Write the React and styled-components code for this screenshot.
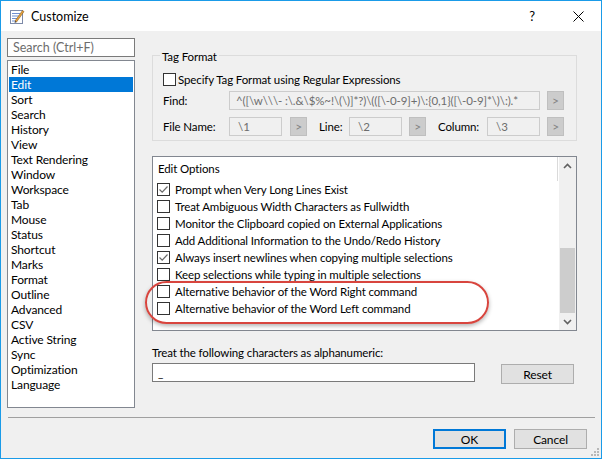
import React from "react";
import styled, { createGlobalStyle } from "styled-components";

const GlobalStyle = createGlobalStyle`
  html, body {
    margin: 0;
    padding: 0;
    background: #ffffff;
  }
  * {
    box-sizing: border-box;
  }
  body {
    font-family: Lato, "Noto Sans", sans-serif;
    font-size: 11.5px;
    letter-spacing: -0.12px;
    color: #000;
  }
`;

const Window = styled.div`
  position: relative;
  width: 602px;
  height: 459px;
  border: 1px solid #1a9be8;
  background: #f0f0f0;
  display: flex;
  flex-direction: column;
`;

const TitleBar = styled.div`
  height: 30px;
  background: #ffffff;
  display: flex;
  align-items: center;
  padding-left: 8px;
`;

const TitleText = styled.span`
  margin-left: 6px;
  font-size: 12.5px;
  letter-spacing: 0;
  flex: 1;
`;

const CaptionButton = styled.div`
  width: 46px;
  height: 30px;
  display: flex;
  align-items: center;
  justify-content: center;
  font-size: 13px;
`;

const Body = styled.div`
  flex: 1;
  display: flex;
  flex-direction: column;
  padding-top: 7px;
`;

const Main = styled.div`
  height: 370px;
  display: flex;
  padding-left: 6px;
`;

const LeftColumn = styled.div`
  width: 128px;
  display: flex;
  flex-direction: column;
`;

const SearchBox = styled.div`
  height: 19px;
  border: 1px solid #7a7a7a;
  background: #fff;
  color: #6d6d6d;
  padding-left: 5px;
  line-height: 17px;
  font-size: 12.5px;
  letter-spacing: 0;
`;

const CategoryList = styled.div`
  margin-top: 3px;
  height: 348px;
  border: 1px solid #828790;
  background: #fff;
  padding: 1px;
`;

const CategoryItem = styled.div`
  height: 15px;
  line-height: 15px;
  padding-left: 2px;
  font-size: 12px;
  background: ${(p) => (p.selected ? "#0078d7" : "transparent")};
  color: ${(p) => (p.selected ? "#fff" : "#000")};
`;

const RightColumn = styled.div`
  margin-left: 17px;
  width: 425px;
  display: flex;
  flex-direction: column;
  padding-top: 17px;
`;

const GroupBox = styled.div`
  border: 1px solid #dcdcdc;
  padding: 0 12px 4px 10px;
  height: 86px;
`;

const GroupLegend = styled.div`
  margin-top: -7px;
  margin-left: -3px;
  width: fit-content;
  padding: 0 2px;
  background: #f0f0f0;
  line-height: 16px;
`;

const CheckRow = styled.label`
  display: flex;
  align-items: center;
  height: 15px;
  margin-top: ${(p) => p.mt || 0}px;
  white-space: nowrap;
`;

const Box = styled.span`
  width: 13px;
  height: 13px;
  border: 1px solid #333;
  background: #fff;
  margin-right: ${(p) => p.gap || 2}px;
  display: flex;
  align-items: center;
  justify-content: center;
  flex-shrink: 0;
`;

const FieldRow = styled.div`
  display: flex;
  align-items: center;
  height: 19px;
  margin-top: ${(p) => p.mt}px;
`;

const FieldLabel = styled.span`
  width: ${(p) => p.w}px;
  margin-left: ${(p) => p.ml || 0}px;
  flex-shrink: 0;
  white-space: nowrap;
`;

const DisabledInput = styled.div`
  width: ${(p) => p.w}px;
  height: 19px;
  border: 1px solid #cccccc;
  background: #f0f0f0;
  color: #6d6d6d;
  padding-left: ${(p) => p.pl || 8}px;
  line-height: 17px;
  white-space: nowrap;
  overflow: hidden;
  letter-spacing: ${(p) => p.ls || 0}px;
`;

const ArrowButton = styled.div`
  width: 17px;
  height: 19px;
  margin-left: ${(p) => p.ml || 7}px;
  background: #cccccc;
  border: 1px solid #bfbfbf;
  color: #838383;
  display: flex;
  align-items: center;
  justify-content: center;
  font-size: 12px;
`;

const OptionsPanel = styled.div`
  position: relative;
  margin-top: 15px;
  height: 175px;
  border: 1px solid #828790;
  background: #fff;
  display: flex;
`;

const OptionsList = styled.div`
  flex: 1;
  display: flex;
  flex-direction: column;
`;

const OptionsHeader = styled.div`
  height: 24px;
  line-height: 24px;
  padding-left: 5px;
  margin-right: 1px;
  border-right: 1px solid #dadada;
`;

const OptionRow = styled(CheckRow)`
  height: 17px;
  padding-left: 4px;
`;

const ScrollBar = styled.div`
  width: 17px;
  background: #f0f0f0;
  display: flex;
  flex-direction: column;
`;

const ScrollArrow = styled.div`
  height: 17px;
  display: flex;
  align-items: center;
  justify-content: center;
`;

const ScrollTrack = styled.div`
  flex: 1;
  display: flex;
  flex-direction: column;
  justify-content: flex-end;
  padding: 0 1px;
`;

const ScrollThumb = styled.div`
  height: 65px;
  background: #cdcdcd;
`;

const Highlight = styled.div`
  position: absolute;
  left: -8px;
  top: 124px;
  width: 344px;
  height: 43px;
  border: 2px solid #d8453e;
  border-radius: 22px;
  box-shadow: 0 2px 4px rgba(0, 0, 0, 0.3);
  pointer-events: none;
`;

const AlnumLabel = styled.div`
  margin-top: 14px;
  line-height: 15px;
`;

const AlnumRow = styled.div`
  margin-top: 3px;
  display: flex;
  align-items: flex-start;
`;

const TextInput = styled.div`
  width: 323px;
  height: 19px;
  border: 1px solid #7a7a7a;
  background: #fff;
  padding-left: 5px;
  line-height: 17px;
`;

const Button = styled.div`
  width: 73px;
  height: 20px;
  margin-top: ${(p) => p.mt || 0}px;
  margin-left: ${(p) => p.ml || 0}px;
  background: #e1e1e1;
  border: ${(p) => (p.primary ? "2px solid #0078d7" : "1px solid #adadad")};
  display: flex;
  align-items: center;
  justify-content: center;
  font-size: 12px;
`;

const Separator = styled.div`
  height: 1px;
  background: #a0a0a0;
  margin: 9px 6px 0 7px;
`;

const Footer = styled.div`
  display: flex;
  justify-content: flex-end;
  padding: 11px 14px 0 0;
  gap: 8px;
`;

const Grip = styled.svg`
  position: absolute;
  right: 1px;
  bottom: 1px;
`;

const categories = [
  "File", "Edit", "Sort", "Search", "History", "View", "Text Rendering",
  "Window", "Workspace", "Tab", "Mouse", "Status", "Shortcut", "Marks",
  "Format", "Outline", "Advanced", "CSV", "Active String", "Sync",
  "Optimization", "Language",
];

const options = [
  ["Prompt when Very Long Lines Exist", true],
  ["Treat Ambiguous Width Characters as Fullwidth", false],
  ["Monitor the Clipboard copied on External Applications", false],
  ["Add Additional Information to the Undo/Redo History", false],
  ["Always insert newlines when copying multiple selections", true],
  ["Keep selections while typing in multiple selections", false],
  ["Alternative behavior of the Word Right command", false],
  ["Alternative behavior of the Word Left command", false],
];

const Check = () => (
  <svg width="11" height="11" viewBox="0 0 11 11">
    <path d="M1.5 5.5 L4.2 8.2 L9.5 2.5" fill="none" stroke="#6a6a6a" strokeWidth="1.2" />
  </svg>
);

const NotepadIcon = () => (
  <svg width="16" height="16" viewBox="0 0 16 16">
    <rect x="1.5" y="2.5" width="12" height="13" fill="#fff" stroke="#7d8aa8" />
    <path d="M3 5.5h8M3 8h8M3 10.5h6M3 13h4" stroke="#6f8fd0" strokeWidth="1" />
    <path d="M6 13 L13.5 2.5 L15 3.6 L7.5 14 Z" fill="#e8a33a" stroke="#8a5a1a" strokeWidth="0.6" />
    <path d="M6 13 L5.6 15 L7.5 14 Z" fill="#333" />
  </svg>
);

export default function App() {
  return (
    <>
      <GlobalStyle />
      <Window>
        <TitleBar>
          <NotepadIcon />
          <TitleText>Customize</TitleText>
          <CaptionButton>?</CaptionButton>
          <CaptionButton>
            <svg width="11" height="11" viewBox="0 0 11 11">
              <path d="M0.5 0.5 L10.5 10.5 M10.5 0.5 L0.5 10.5" stroke="#000" strokeWidth="1" />
            </svg>
          </CaptionButton>
        </TitleBar>
        <Body>
          <Main>
            <LeftColumn>
              <SearchBox>Search (Ctrl+F)</SearchBox>
              <CategoryList>
                {categories.map((c) => (
                  <CategoryItem key={c} selected={c === "Edit"}>
                    {c}
                  </CategoryItem>
                ))}
              </CategoryList>
            </LeftColumn>
            <RightColumn>
              <GroupBox>
                <GroupLegend>Tag Format</GroupLegend>
                <CheckRow mt={7}>
                  <Box gap={2} />
                  Specify Tag Format using Regular Expressions
                </CheckRow>
                <FieldRow mt={4}>
                  <FieldLabel w={66}>Find:</FieldLabel>
                  <DisabledInput w={312} pl={6} ls={-0.1}>
                    ^([\w\\\- :\.&amp;\$%~!\(\)]*?)\(([\-0-9]+)\:{"{0,1}"}([\-0-9]*\)\:).*
                  </DisabledInput>
                  <ArrowButton>&gt;</ArrowButton>
                </FieldRow>
                <FieldRow mt={7}>
                  <FieldLabel w={66}>File Name:</FieldLabel>
                  <DisabledInput w={54}>\1</DisabledInput>
                  <ArrowButton ml={8}>&gt;</ArrowButton>
                  <FieldLabel w={30} ml={12}>Line:</FieldLabel>
                  <DisabledInput w={54}>\2</DisabledInput>
                  <ArrowButton>&gt;</ArrowButton>
                  <FieldLabel w={49} ml={12}>Column:</FieldLabel>
                  <DisabledInput w={54}>\3</DisabledInput>
                  <ArrowButton>&gt;</ArrowButton>
                </FieldRow>
              </GroupBox>
              <OptionsPanel>
                <OptionsList>
                  <OptionsHeader>Edit Options</OptionsHeader>
                  {options.map(([label, checked]) => (
                    <OptionRow key={label}>
                      <Box gap={5}>{checked && <Check />}</Box>
                      {label}
                    </OptionRow>
                  ))}
                </OptionsList>
                <ScrollBar>
                  <ScrollArrow>
                    <svg width="9" height="6" viewBox="0 0 9 6">
                      <path d="M1 5 L4.5 1.5 L8 5" fill="none" stroke="#606060" strokeWidth="1.6" />
                    </svg>
                  </ScrollArrow>
                  <ScrollTrack>
                    <ScrollThumb />
                  </ScrollTrack>
                  <ScrollArrow>
                    <svg width="9" height="6" viewBox="0 0 9 6">
                      <path d="M1 1 L4.5 4.5 L8 1" fill="none" stroke="#606060" strokeWidth="1.6" />
                    </svg>
                  </ScrollArrow>
                </ScrollBar>
                <Highlight />
              </OptionsPanel>
              <AlnumLabel>Treat the following characters as alphanumeric:</AlnumLabel>
              <AlnumRow>
                <TextInput>_</TextInput>
                <Button ml={26} mt={1}>Reset</Button>
              </AlnumRow>
            </RightColumn>
          </Main>
          <Separator />
          <Footer>
            <Button primary>OK</Button>
            <Button>Cancel</Button>
          </Footer>
        </Body>
        <Grip width="10" height="10" viewBox="0 0 10 10">
          <rect x="7" y="1" width="2" height="2" fill="#b8b8b8" />
          <rect x="4" y="4" width="2" height="2" fill="#b8b8b8" />
          <rect x="7" y="4" width="2" height="2" fill="#b8b8b8" />
          <rect x="1" y="7" width="2" height="2" fill="#b8b8b8" />
          <rect x="4" y="7" width="2" height="2" fill="#b8b8b8" />
          <rect x="7" y="7" width="2" height="2" fill="#b8b8b8" />
        </Grip>
      </Window>
    </>
  );
}
